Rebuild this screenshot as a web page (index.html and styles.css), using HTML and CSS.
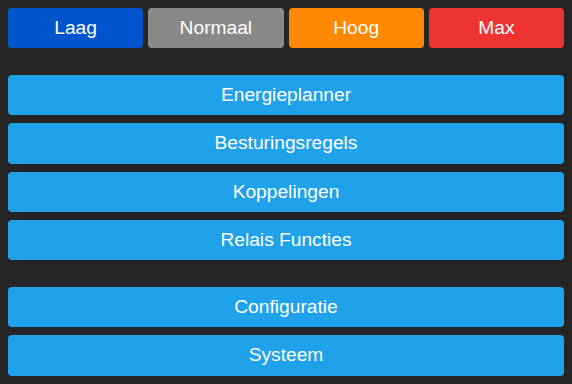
FILE: index.html
```html
<!DOCTYPE html>
<html>
<head>
<meta charset="utf-8">
<link rel="stylesheet" href="styles.css">
</head>
<body>
<div class="modes">
  <button class="btn mode laag">Laag</button>
  <button class="btn mode normaal">Normaal</button>
  <button class="btn mode hoog">Hoog</button>
  <button class="btn mode max">Max</button>
</div>
<div class="group">
  <button class="btn nav">Energieplanner</button>
  <button class="btn nav">Besturingsregels</button>
  <button class="btn nav">Koppelingen</button>
  <button class="btn nav">Relais Functies</button>
</div>
<div class="group second">
  <button class="btn nav">Configuratie</button>
  <button class="btn nav">Systeem</button>
</div>
</body>
</html>
```
FILE: styles.css
```css
html, body {
  margin: 0;
  background: #252525;
}
body {
  padding: 8px;
  font-family: "Liberation Sans", Arial, sans-serif;
}
.btn {
  border: none;
  border-radius: 4px;
  height: 40px;
  color: #fff;
  font-family: "Liberation Sans", Arial, sans-serif;
  font-size: 19.2px;
  padding: 0;
  cursor: pointer;
}
.modes {
  display: grid;
  grid-template-columns: repeat(4, 1fr);
  gap: 5px;
}
.laag { background: #0055cc; }
.normaal { background: #888888; }
.hoog { background: #ff8800; }
.max { background: #ee3333; }
.group {
  display: flex;
  flex-direction: column;
  gap: 8px;
  margin-top: 27px;
}
.group.second {
  margin-top: 26.67px;
}
.nav {
  background: #1fa2ea;
  width: 100%;
  height: 40.33px;
}
```
